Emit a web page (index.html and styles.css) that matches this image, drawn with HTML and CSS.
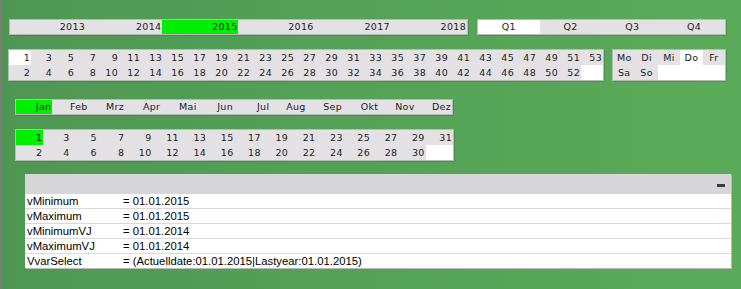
FILE: index.html
```html
<!DOCTYPE html>
<html lang="de">
<head>
    <meta charset="UTF-8">
    <title>Kalender</title>
    <link rel="stylesheet" href="styles.css">
</head>
<body>
    <div class="sheet">
        <div class="row row-top">
            <div class="bar years">
                <div class="cell">2013</div>
                <div class="cell">2014</div>
                <div class="cell selected">2015</div>
                <div class="cell">2016</div>
                <div class="cell">2017</div>
                <div class="cell">2018</div>
            </div>
            <div class="bar quarters">
                <div class="cell white">Q1</div>
                <div class="cell">Q2</div>
                <div class="cell">Q3</div>
                <div class="cell">Q4</div>
            </div>
        </div>

        <div class="row row-weeks">
            <div class="bar weeks" id="weeks"></div>
            <div class="bar weekdays">
                <div class="cell">Mo</div>
                <div class="cell">Di</div>
                <div class="cell">Mi</div>
                <div class="cell white">Do</div>
                <div class="cell">Fr</div>
                <div class="cell">Sa</div>
                <div class="cell">So</div>
                <div class="cell white"></div>
                <div class="cell white"></div>
                <div class="cell white"></div>
            </div>
        </div>

        <div class="bar months">
            <div class="cell selected">Jan</div>
            <div class="cell">Feb</div>
            <div class="cell">Mrz</div>
            <div class="cell">Apr</div>
            <div class="cell">Mai</div>
            <div class="cell">Jun</div>
            <div class="cell">Jul</div>
            <div class="cell">Aug</div>
            <div class="cell">Sep</div>
            <div class="cell">Okt</div>
            <div class="cell">Nov</div>
            <div class="cell">Dez</div>
        </div>

        <div class="bar days" id="days"></div>

        <div class="vars">
            <div class="vars-head"><span class="minimize"></span></div>
            <div class="var-row"><span class="var-name">vMinimum</span><span>= 01.01.2015</span></div>
            <div class="var-row"><span class="var-name">vMaximum</span><span>= 01.01.2015</span></div>
            <div class="var-row"><span class="var-name">vMinimumVJ</span><span>= 01.01.2014</span></div>
            <div class="var-row"><span class="var-name">vMaximumVJ</span><span>= 01.01.2014</span></div>
            <div class="var-row"><span class="var-name">VvarSelect</span><span>= (Actuelldate:01.01.2015|Lastyear:01.01.2015)</span></div>
        </div>
    </div>

    <script>
        function fill(id, last, marked, markClass) {
            var box = document.getElementById(id);
            for (var i = 1; i <= last + 1; i++) {
                var cell = document.createElement('div');
                cell.className = 'cell';
                if (i <= last) {
                    cell.textContent = i;
                } else {
                    cell.className += ' white';
                }
                if (i === marked) {
                    cell.className += ' ' + markClass;
                }
                box.appendChild(cell);
            }
        }
        fill('weeks', 53, 1, 'white');
        fill('days', 31, 1, 'selected');
    </script>
</body>
</html>
```

FILE: styles.css
```css
body {
    margin: 0;
    width: 741px;
    height: 289px;
    overflow: hidden;
    font-family: "DejaVu Sans", Verdana, sans-serif;
    background: linear-gradient(90deg, #4e9753 0%, #55a257 50%, #5aab59 100%);
}
.sheet {
    height: 289px;
    box-sizing: border-box;
    border-left: 2px solid #7c7c7c;
    padding-top: 19px;
}
.row {
    display: flex;
}
.bar {
    display: grid;
    box-sizing: border-box;
    background-color: #e3e1e4;
    border: 1px solid #b9b9b9;
    box-shadow: 1px 1px 0 rgba(0, 0, 0, 0.12);
    font-size: 9.5px;
    color: #1c1c1c;
}
.cell {
    height: 15px;
    line-height: 15px;
    text-align: right;
    padding-right: 1px;
    white-space: nowrap;
    letter-spacing: 0.3px;
}
.cell.selected {
    background-color: #00ee00;
}
.cell.white {
    background-color: #ffffff;
}

/* years and quarters */
.row-top .bar .cell {
    height: 14px;
    line-height: 14px;
}
.years {
    margin-left: 7px;
    width: 459px;
    height: 16px;
    grid-template-columns: repeat(6, 1fr);
}
.quarters {
    margin-left: 9px;
    width: 249px;
    height: 16px;
    grid-template-columns: repeat(4, 1fr);
}
.quarters .cell {
    text-align: center;
    padding-right: 0;
}

/* weeks and weekdays */
.row-weeks {
    margin-top: 14px;
}
.weeks {
    margin-left: 6px;
    width: 596px;
    height: 32px;
    grid-template-rows: repeat(2, 15px);
    grid-auto-flow: column;
    grid-auto-columns: 1fr;
}
.weekdays {
    margin-left: 8px;
    width: 114px;
    height: 32px;
    grid-template-columns: repeat(5, 1fr);
    grid-template-rows: repeat(2, 15px);
}
.weekdays .cell {
    text-align: center;
    padding-right: 0;
}

/* months and days */
.months {
    margin: 18px 0 0 13px;
    width: 438px;
    height: 16px;
    grid-template-columns: repeat(12, 1fr);
}
.months .cell {
    height: 14px;
    line-height: 14px;
}
.days {
    margin: 14px 0 0 13px;
    width: 439px;
    height: 32px;
    grid-template-rows: repeat(2, 15px);
    grid-auto-flow: column;
    grid-auto-columns: 1fr;
}

/* variables table */
.vars {
    margin: 13px 0 0 23px;
    width: 706px;
    background-color: #ffffff;
    box-shadow: 1px 1px 0 #b9b9b9;
    font-family: "Liberation Sans", Arial, sans-serif;
    font-size: 11.3px;
    color: #000000;
}
.vars-head {
    height: 20px;
    background-color: #d6d5d8;
    display: flex;
    justify-content: flex-end;
    align-items: center;
    padding-right: 6px;
}
.minimize {
    display: block;
    width: 8px;
    height: 3px;
    margin-top: 2px;
    background-color: #3c3c3c;
}
.var-row {
    display: flex;
    height: 14px;
    line-height: 14px;
    padding-left: 2px;
    border-bottom: 1px solid #d9d9d9;
}
.var-row:last-child {
    border-bottom: none;
}
.var-name {
    width: 96px;
}
```
